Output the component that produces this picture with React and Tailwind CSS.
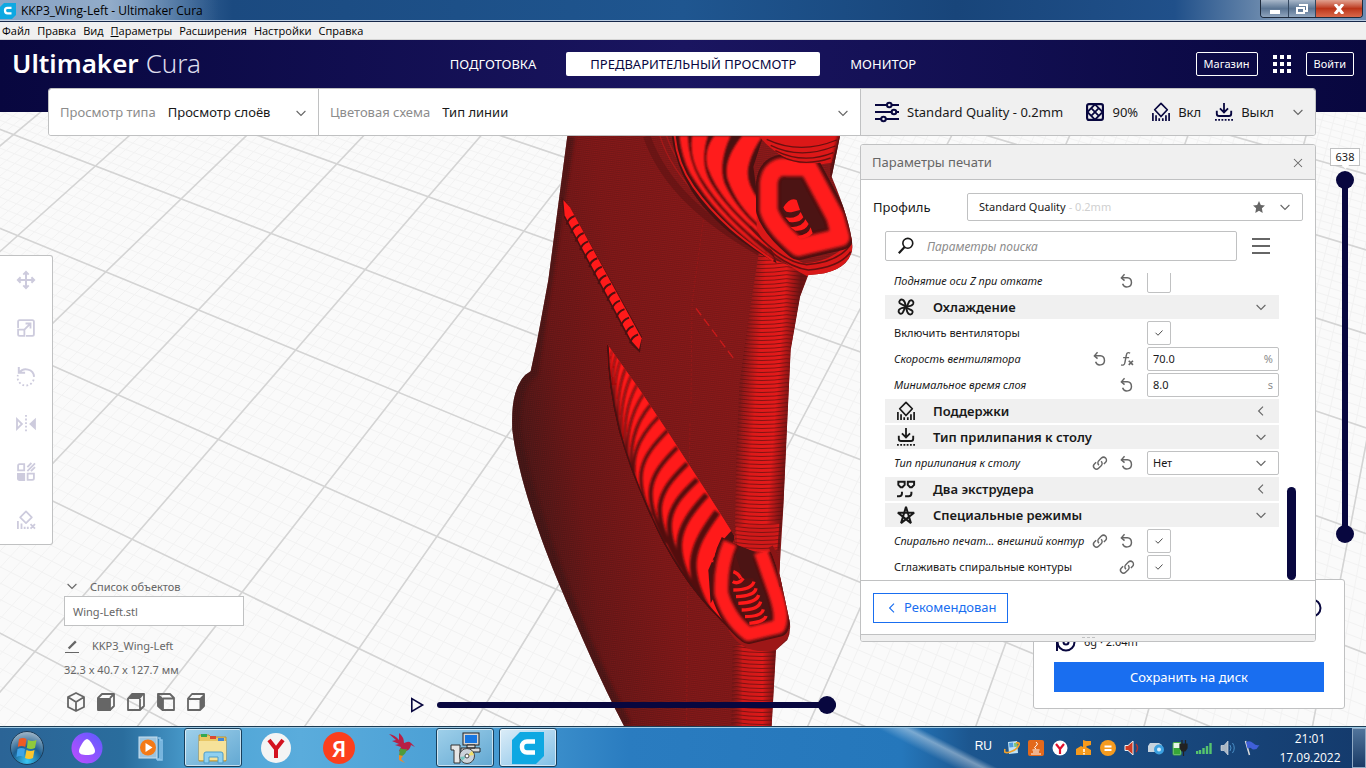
import { useState } from "react";
import clsx from "clsx";

const MENU = ["Файл", "Правка", "Вид", "Параметры", "Расширения", "Настройки", "Справка"];
const STAGES = ["ПОДГОТОВКА", "ПРЕДВАРИТЕЛЬНЫЙ ПРОСМОТР", "МОНИТОР"];

const SETTINGS = [
  { label: "Поднятие оси Z при откате", changed: true, marks: ["reset"], type: "check", value: false },
  { label: "Охлаждение", type: "category", icon: "fan", open: true },
  { label: "Включить вентиляторы", marks: [], type: "check", value: true },
  { label: "Скорость вентилятора", changed: true, marks: ["reset", "fx"], type: "number", value: "70.0", unit: "%" },
  { label: "Минимальное время слоя", changed: true, marks: ["reset"], type: "number", value: "8.0", unit: "s" },
  { label: "Поддержки", type: "category", icon: "support", open: false },
  { label: "Тип прилипания к столу", type: "category", icon: "adhesion", open: true },
  { label: "Тип прилипания к столу", changed: true, marks: ["link", "reset"], type: "select", value: "Нет" },
  { label: "Два экструдера", type: "category", icon: "dual", open: false },
  { label: "Специальные режимы", type: "category", icon: "star", open: true },
  { label: "Спирально печат... внешний контур", changed: true, marks: ["link", "reset"], type: "check", value: true },
  { label: "Сглаживать спиральные контуры", marks: ["link"], type: "check", value: true },
];

/* ---------- icons ---------- */

const BLADE = "M10 10C9 7.500 9.500 3.500 6.500 2 4 1 1.500 3.500 3 5.800 4.500 7.500 8 7.500 10 10z";

const GLYPHS = {
  down: <path d="M4.500 7.500l5.500 5.500 5.500-5.500" strokeWidth="1.400" />,
  left: <path d="M12.500 4.500L7 10l5.500 5.500" strokeWidth="1.400" />,
  close: <path d="M5 5l10 10M15 5L5 15" strokeWidth="1.300" />,
  check: <path d="M3 9.500l5 5 9-9.500" strokeWidth="2" />,
  search: (
    <>
      <circle cx="12" cy="7" r="5.500" strokeWidth="1.800" />
      <path d="M8.500 11L2 18" strokeWidth="2.400" />
    </>
  ),
  reset: (
    <>
      <path d="M2.500 5.500h8a6.500 6.500 0 1 1-6.800 8.500" strokeWidth="2.100" />
      <path d="M6.500 0.500L2 5.500l4.500 4" strokeWidth="2.100" />
    </>
  ),
  fx: (
    <>
      <path d="M14.500 1.500c-4-1.500-5 0-5.500 3.500L7 15c-.5 3-2 4.500-5.500 3.500M4.500 8h8.500" strokeWidth="2" />
      <path d="M12.500 12.500l6 6M18.500 12.500l-6 6" strokeWidth="2.400" />
    </>
  ),
  link: (
    <>
      <path d="M8.500 13a4.200 4.200 0 0 1-.5-6l4-4a4.200 4.200 0 0 1 6 6l-2.500 2.500" strokeWidth="2" />
      <path d="M11.500 7.500a4.200 4.200 0 0 1 .5 6l-4 4a4.200 4.200 0 0 1-6-6l2.500-2.500" strokeWidth="2" />
    </>
  ),
  fan: (
    <g strokeWidth="2.100" strokeLinejoin="round">
      <path d={BLADE} />
      <path d={BLADE} transform="rotate(90 10 10)" />
      <path d={BLADE} transform="rotate(180 10 10)" />
      <path d={BLADE} transform="rotate(270 10 10)" />
    </g>
  ),
  support: (
    <>
      <path d="M10 .5l7 7-7 7.500L3 7.500z" strokeWidth="1.900" strokeLinejoin="round" />
      <path d="M1 11v9M19 11v9M4.500 13.500V20M15.500 13.500V20M8 17v3M12 17v3" strokeWidth="1.900" />
    </>
  ),
  adhesion: (
    <>
      <path d="M10 0v10M5.500 6l4.500 4.500L14.500 6" strokeWidth="2" />
      <path d="M2 8.500v3.500q0 2.500 2.500 2.500h11q2.500 0 2.500-2.500V8.500" strokeWidth="2.100" />
      <path d="M0 18.800h20" strokeWidth="2" strokeDasharray="2 1.600" />
    </>
  ),
  infill: (
    <>
      <rect x="1.200" y="1.200" width="17.600" height="17.600" rx="2" strokeWidth="2.400" />
      <path d="M10 1.500l8.500 8.500-8.500 8.500L1.500 10zM5.500 5.500l9 9M14.500 5.500l-9 9" strokeWidth="2" />
    </>
  ),
  dual: (
    <g strokeWidth="2.200">
      <path d="M1.500 2h7v3.500L6 8H4L1.500 5.500zM12 2h7v3.500L16.500 8h-2L12 5.500z" />
      <path d="M0 18h2.500q3 0 3-3v-2M9 18h4q3 0 3-3v-2" />
    </g>
  ),
  star: <path d="M10 1l5.500 18L1 7.500h18L4.500 19z" strokeWidth="2.200" strokeLinejoin="bevel" />,
  sliders: (
    <g strokeWidth="1.700">
      <path d="M0 4.200h9.800M14 4.200H20M0 10h13.500M18 10H20M0 15.800h5M9.200 15.800H20" />
      <circle cx="11.900" cy="4.200" r="1.900" />
      <circle cx="15.800" cy="10" r="1.900" />
      <circle cx="7.100" cy="15.800" r="1.900" />
    </g>
  ),
  move: (
    <path d="M10 1v18M1 10h18M7 4l3-3 3 3M7 16l3 3 3-3M4 7l-3 3 3 3M16 7l3 3-3 3" strokeWidth="2.200" />
  ),
  scale: (
    <g strokeWidth="2">
      <path d="M1.200 10V3q0-1.800 1.800-1.800h14q1.800 0 1.800 1.800v14q0 1.800-1.800 1.800h-7" />
      <path d="M1.200 11.800h7v7H3q-1.800 0-1.800-1.800z" />
      <path d="M8.500 11.500L15 5M9.500 5H15v5.500" />
    </g>
  ),
  rotate: (
    <>
      <path d="M2 0v6.500h7M2.500 6.500C7 0 18.500 2 19 11" strokeWidth="2.200" />
      <path d="M18.500 14A9 9 0 0 1 1 9" strokeWidth="2" strokeDasharray="2 2.500" />
    </>
  ),
  mirror: (
    <>
      <path d="M0 4.500v11L5.500 10z" strokeWidth="2" />
      <path d="M21 3v14l-7.500-7z" fill="currentColor" stroke="none" />
      <path d="M10 0v20" strokeWidth="2" strokeDasharray="2 2" />
    </>
  ),
  mesh: (
    <>
      <path d="M1.200 3q0-1.800 1.800-1.800h5v7H1.200zM11.800 11.800h7V17q0 1.800-1.800 1.800h-5.200z" strokeWidth="2" />
      <path d="M0 11h9v9H3q-3 0-3-3z" fill="currentColor" stroke="none" />
      <path d="M11.500 4.500L16 0M11.500 9L20 .5M15.500 9L20 4.500" strokeWidth="2" />
    </>
  ),
  blocker: (
    <>
      <path d="M10 .5l6.500 6.500-6.500 6.500L3.500 7z" strokeWidth="1.900" strokeLinejoin="round" />
      <path d="M1 11v9M5 14v6M8.500 17.500V20M12 17.500V20M15 14.500l5 5M20 14.500l-5 5" strokeWidth="2" />
    </>
  ),
  play: <path d="M3.500 2v16L17 10z" strokeWidth="2" />,
  pencil: <path d="M3 15.500L16 2.500" strokeWidth="4.200" />,
};

function Glyph({ name, className }) {
  return (
    <svg viewBox="0 0 20 20" fill="none" stroke="currentColor" className={clsx("shrink-0 overflow-visible", className)} aria-hidden="true">
      {GLYPHS[name]}
    </svg>
  );
}

/* ---------- 3D view ---------- */

// build plate coordinates (one unit = one thick grid cell) to view coordinates
const project = (u, v) => {
  const w = 1 - 0.02304 * u - 0.04645 * v;
  return `${((81.52 * u - 78.49 * v + 95.4) / w).toFixed(1)},${((28.3 * u + 58.64 * v + 166) / w).toFixed(1)}`;
};

const gridPath = (step) => {
  let d = "";
  for (let i = 0; i * step <= 21; i++) {
    const u = -5 + i * step;
    d += `M${project(u, -9)}L${project(u, 8)}`;
  }
  for (let i = 0; i * step <= 17; i++) {
    const v = -9 + i * step;
    d += `M${project(-5, v)}L${project(16, v)}`;
  }
  return d;
};

// dark gaps between the infill ribs: path and width
const LOWER_RIBS = [
  ["M368 660Q350 700 366 800", 4],
  ["M380 672Q358 730 374 850", 5],
  ["M392 690Q364 760 382 890", 5],
  ["M408 712Q374 790 388 920", 6],
  ["M424 736Q384 820 396 950", 6],
  ["M442 762Q392 850 408 985", 6],
  ["M462 790Q398 885 416 1010", 7],
  ["M484 822Q406 910 428 1050", 8],
  ["M508 858C446 920 404 990 452 1110", 9],
  ["M534 900C456 980 424 1030 482 1160", 10],
  ["M562 952C474 1040 452 1090 528 1240", 12],
  ["M592 1000C500 1090 472 1140 572 1310", 13],
  ["M622 1048C524 1140 500 1190 614 1380", 15],
  ["M650 1094C552 1200 532 1260 642 1430", 17],
  ["M682 1146C598 1260 576 1320 676 1480", 20],
];

const UPPER_RIBS = [
  "M568 18Q574 80 600 130C660 230 740 310 856 392L846 378C750 300 670 220 630 150Q596 90 594 18z",
  "M606 18Q596 80 632 142C690 235 760 300 842 362L832 342C760 280 700 220 664 160Q628 100 654 18z",
  "M672 18Q640 60 652 112Q690 220 828 326L816 302Q738 236 704 160Q684 100 722 18z",
  "M756 18Q698 90 712 146Q740 230 816 292L803 205Q762 150 778 100Q788 60 818 18z",
];

const RING = "M895 112Q842 105 836 160L836 240Q850 290 925 352L1052 322L1035 260L955 112z";
const SPAR = "M806 370L955 430L930 500L902 660L892 870L880 1130L868 1262Q800 1275 734 1245L738 1000L748 760L776 560z";
const SPAR_END = "M728 1545L858 1545L845 1788H724z";

function Wing() {
  return (
    <g transform="translate(490 130) scale(.33333)">
      <defs>
        <linearGradient id="skin" gradientUnits="userSpaceOnUse" x1="90" y1="900" x2="800" y2="780">
          <stop offset="0" stopColor="#4a1717" />
          <stop offset=".2" stopColor="#6a1717" />
          <stop offset=".5" stopColor="#801818" />
          <stop offset="1" stopColor="#8b1919" />
        </linearGradient>
        <linearGradient id="spar" gradientUnits="userSpaceOnUse" x1="736" y1="1000" x2="888" y2="1012">
          <stop offset="0" stopColor="#e21a1a" stopOpacity="0" />
          <stop offset=".3" stopColor="#dd1919" />
          <stop offset=".7" stopColor="#e41a1a" />
          <stop offset="1" stopColor="#6b1414" />
        </linearGradient>
        <linearGradient id="sparEnd">
          <stop offset="0" stopColor="#8a1717" stopOpacity="0" />
          <stop offset=".25" stopColor="#cc1919" />
          <stop offset=".7" stopColor="#dd1919" />
          <stop offset="1" stopColor="#6b1414" />
        </linearGradient>
        <pattern id="weave" width="6" height="6" patternUnits="userSpaceOnUse" patternTransform="rotate(7)">
          <path d="M0 1h6" stroke="#3a1010" strokeWidth="2" opacity=".4" />
          <path d="M0 4h3" stroke="#a31d1d" strokeWidth="2" opacity=".35" />
        </pattern>
        <pattern id="rings" width="150" height="12" x="740" patternUnits="userSpaceOnUse">
          <path d="M0 2Q75 13 150 2" fill="none" stroke="#5a1010" strokeWidth="3" opacity=".7" />
        </pattern>
        <filter id="soft" x="-20%" y="-20%" width="140%" height="140%">
          <feGaussianBlur stdDeviation="4" />
        </filter>
        <filter id="softer" x="-20%" y="-20%" width="140%" height="140%">
          <feGaussianBlur stdDeviation="2.500" />
        </filter>
        <clipPath id="leaf">
          <path d="M350 640L450 780L530 900L640 1070L735 1220L700 1330L690 1420L730 1510Q580 1370 500 1200T385 900Q352 770 350 640z" />
        </clipPath>
        <clipPath id="body">
          <path d="M232 18L210 185L175 450L140 640L122 724Q90 740 76 790Q64 830 67 900C80 1010 130 1180 215 1380C270 1510 330 1650 402 1788L845 1788L858 1560L892 1530Q905 1500 898 1470L868 1330L880 1130L892 870L902 660L930 500L955 435Q1080 430 1088 350Q1080 270 1025 140L1050 18z" />
        </clipPath>
      </defs>

      <g clipPath="url(#body)">
        <rect x="50" y="0" width="1060" height="1800" fill="url(#skin)" />
        <path d="M232 18L122 724Q66 760 67 900C80 1010 200 1400 402 1788" fill="none" stroke="#3b1212" strokeWidth="46" opacity=".6" filter="url(#soft)" />
        <rect x="50" y="0" width="1060" height="1800" fill="url(#weave)" />
        <path d="M640 270L606 520L603 820M600 880L592 1500L590 1780" fill="none" stroke="#a01a1a" strokeWidth="3" strokeDasharray="8 6" opacity=".6" />
        <path d="M618 535L738 695" fill="none" stroke="#c81a1a" strokeWidth="4" strokeDasharray="26 14" />
        <path d="M470 18C520 160 640 280 870 400" fill="none" stroke="#5d1313" strokeWidth="22" opacity=".6" />
        <path d="M510 18C550 150 680 270 880 395M530 18C570 140 700 260 880 380" fill="none" stroke="#b31a1a" strokeWidth="4" opacity=".7" />

        {/* spar tube between the ribs */}
        <path d={SPAR} fill="url(#spar)" />
        <path d={SPAR} fill="url(#rings)" />
        <path d={SPAR_END} fill="url(#sparEnd)" />
        <path d={SPAR_END} fill="url(#rings)" />

        {/* upper ribs */}
        <path d="M545 18C570 200 700 310 860 400L810 260L790 110L820 18z" fill="#471111" />
        <path d="M554 18Q562 100 610 170C680 270 760 330 850 392" fill="none" stroke="#e01a1a" strokeWidth="6" />
        {UPPER_RIBS.map((d) => (
          <path key={d} d={d} fill="#ff1a1a" filter="url(#softer)" />
        ))}
        <path d="M808 18H1050L1025 98Q930 115 880 80Q830 50 808 18z" fill="#d91818" />

        {/* upper spar socket */}
        <path d="M800 250Q840 350 940 400Q1040 395 1086 320V360Q1070 430 955 440Q850 390 800 300z" fill="#d91818" />
        <path d="M780 290Q870 395 950 404Q1050 396 1084 340M800 330Q890 412 955 420Q1050 412 1082 365" fill="none" stroke="#681010" strokeWidth="5" />
        <path d={RING} fill="#4c1414" stroke="#4a1010" strokeWidth="76" strokeLinejoin="round" />
        <path d={RING} fill="none" stroke="#ff1a1a" strokeWidth="54" strokeLinejoin="round" filter="url(#soft)" />
        <path d="M880 232Q900 200 920 210L930 240L910 245Q890 250 884 240M886 262Q920 268 932 246L940 262Q930 280 898 276M902 292Q940 290 946 268L956 282Q945 305 916 302M922 318Q955 316 962 292L968 310Q950 328 930 326" fill="#ff1a1a" />
        <path d="M822 18C845 60 875 85 930 100Q990 102 1018 94L1040 18z" fill="#dc1818" />
        <path d="M830 28Q930 75 1040 30M842 46Q930 90 1036 48M856 62Q940 104 1030 68M875 80Q940 112 1022 84" fill="none" stroke="#681010" strokeWidth="4" />
        <path d="M1052 18L1026 140" stroke="#4a1010" strokeWidth="16" filter="url(#soft)" />

        {/* strip of infill steps */}
        <path d="M214 200L240 232L456 620L450 668L425 645L222 262z" fill="#4a1111" />
        <path d="M220 210L240 232L455 625L447 658L424 632L224 256z" fill="#ff1a1a" />
        {Array.from({ length: 15 }, (_, i) => (
          <path key={i} d={`M${254 + i * 13.6} ${258 + i * 25.4}q-20 6-24 26`} fill="none" stroke="#4a1111" strokeWidth="6" />
        ))}

        {/* lower ribs */}
        <g clipPath="url(#leaf)">
          <rect x="340" y="630" width="420" height="900" fill="#ff1a1a" />
          <g fill="none" filter="url(#softer)">
            {LOWER_RIBS.map(([d, w]) => (
              <path key={d} d={d} stroke="#521010" strokeWidth={w} />
            ))}
          </g>
          <path d="M350 640Q352 770 385 900T500 1200T730 1510" fill="none" stroke="#4a1010" strokeWidth="12" />
          <path d="M735 1190L690 1240L655 1320L662 1420L730 1300z" fill="#471212" />
          <path d="M675 1235l8 8m-10 14l12 4m-16 14l10 5m-12 12l8 4" stroke="#ff1a1a" strokeWidth="8" />
        </g>

        {/* lower spar socket */}
        <path d="M715 1500Q760 1580 858 1560L895 1520V1500z" fill="#9d1717" />
        <path d="M722 1235Q688 1300 694 1390Q715 1465 775 1512L866 1490Q880 1460 856 1390L815 1275z" fill="#4c1414" />
        <path d="M722 1235Q688 1300 694 1390Q715 1465 775 1512L866 1490Q880 1460 856 1390L815 1275" fill="none" stroke="#4a1010" strokeWidth="60" strokeLinejoin="round" />
        <path d="M720 1238Q690 1310 694 1390Q715 1465 775 1512L866 1490Q880 1460 856 1390L812 1265" fill="none" stroke="#ff1a1a" strokeWidth="42" strokeLinejoin="round" filter="url(#soft)" />
        <path d="M735 1270Q728 1310 728 1350L745 1420L780 1485L828 1472L808 1400L790 1345L760 1345z" fill="#571212" />
        <path
          d="M730 1325Q745 1330 752 1345M728 1355Q745 1365 760 1345M730 1380Q785 1380 792 1355M738 1400Q795 1398 798 1375M745 1420Q800 1418 806 1395M755 1440Q806 1440 812 1415M765 1460Q815 1460 820 1438M778 1480Q824 1476 828 1458"
          fill="none"
          stroke="#ff1a1a"
          strokeWidth="10"
        />
        <path d="M738 1190L742 1245Q800 1270 862 1258L868 1180z" fill="#d01919" />
        <path d="M738 1190L742 1245Q800 1270 862 1258L868 1180z" fill="url(#rings)" />
        <path d="M842 1250Q872 1300 874 1370" fill="none" stroke="#8a1515" strokeWidth="14" />
      </g>
    </g>
  );
}

function Viewport() {
  return (
    <svg viewBox="0 112 1366 614" preserveAspectRatio="xMidYMid slice" className="absolute inset-0 size-full" aria-hidden="true">
      <rect x="-500" y="0" width="2400" height="1200" fill="#fafafa" />
      <path d={gridPath(0.1)} stroke="#f2f2f2" strokeWidth="1" fill="none" />
      <path d={gridPath(1)} stroke="#d4d4d4" strokeWidth="1.600" fill="none" />
      <Wing />
    </svg>
  );
}

/* ---------- window chrome ---------- */

function TitleBar() {
  return (
    <div className="flex h-[22px] shrink-0 items-start border-b border-[#16284a] bg-[linear-gradient(90deg,#7f9cc0_0%,#4f79a8_10%,#1b4a80_17%,#1f5690_50%,#18457a_70%,#20508a_86%,#7d97b5_94%,#6d8db4_100%)] shadow-[inset_0_-1px_0_#b9cbe0]">
      <div className="flex h-[21px] items-center gap-[5px] bg-linear-to-r from-white/10 via-white/35 to-transparent pr-4">
        <CuraLogo className="size-4" />
        <span className="font-['Open_Sans','Noto_Sans',sans-serif] text-[12px] leading-4 text-black">KKP3_Wing-Left - Ultimaker Cura</span>
      </div>
      <div className="mr-[3px] ml-auto flex h-[18px] overflow-hidden rounded-b-[4px] border border-t-0 border-[#1d2a3c] text-white">
        <button aria-label="Свернуть" className="flex w-7 items-center justify-center border-r border-[#33475f] bg-linear-to-b from-[#a9b8ca] via-[#5b7593] via-50% to-[#8fa4bd]">
          <span className="mt-1.5 h-1 w-2.5 bg-white" />
        </button>
        <button aria-label="Развернуть" className="flex w-[27px] items-center justify-center border-r border-[#33475f] bg-linear-to-b from-[#a9b8ca] via-[#5b7593] via-50% to-[#8fa4bd]">
          <svg viewBox="0 0 14 12" className="h-3 w-3.5" fill="none" stroke="#fff" strokeWidth="2">
            <path d="M5 3V2h7v6h-2" />
            <path d="M2 5h7v5H2z" />
          </svg>
        </button>
        <button aria-label="Закрыть" className="flex w-[46px] items-center justify-center bg-linear-to-b from-[#e0a08f] via-[#bb3418] via-50% to-[#d9684a]">
          <svg viewBox="0 0 12 10" className="h-2.5 w-3" stroke="#fff" strokeWidth="3">
            <path d="M2 0l8 10M10 0L2 10" />
          </svg>
        </button>
      </div>
    </div>
  );
}

function MenuBar() {
  return (
    <nav className="flex h-[18px] shrink-0 items-center gap-[7px] border-b border-[#d5d5d5] bg-[#f0f0f0] pl-0.5 font-['Open_Sans','Noto_Sans',sans-serif] text-[11px] leading-4 text-black">
      {MENU.map((item) => (
        <button key={item}>
          {item === "Параметры" ? (
            <>
              <u>П</u>араметры
            </>
          ) : (
            item
          )}
        </button>
      ))}
    </nav>
  );
}

function Header() {
  const [stage, setStage] = useState(STAGES[1]);
  return (
    <header className="flex h-[72px] shrink-0 items-start bg-linear-to-r from-[#08073f] via-[#1a1560] to-[#08073f] text-white">
      <div className="flex h-[46px] flex-1 items-center pl-3 text-[26px] leading-8">
        <span className="font-semibold">Ultimaker</span>
        <span className="ml-[7px] font-light text-[#dcdcec]">Cura</span>
      </div>
      <div className="flex h-12 items-center gap-1.5">
        {STAGES.map((s) => (
          <button
            key={s}
            onClick={() => setStage(s)}
            className={clsx("h-6 rounded-[2px] px-6 text-[13px] leading-5", s === stage && "bg-white text-[#08073f]")}
          >
            {s}
          </button>
        ))}
      </div>
      <div className="flex h-12 flex-1 items-center justify-end gap-[15px] pr-3 text-[11px]">
        <button className="h-6 rounded-[2px] border border-white px-[7px] pt-px">Магазин</button>
        <button aria-label="Приложения" className="grid grid-cols-3 gap-[3px]">
          {Array.from({ length: 9 }, (_, i) => (
            <span key={i} className="size-1 bg-white" />
          ))}
        </button>
        <button className="h-6 rounded-[2px] border border-white px-[7px] pt-px">Войти</button>
      </div>
    </header>
  );
}

function ViewSelect({ id, label, value, className }) {
  return (
    <div className={clsx("flex items-center gap-3 bg-white pt-px pl-[11px] text-[13px]", className)}>
      <label htmlFor={id} className="text-[#8c8c8c]">
        {label}
      </label>
      <div className="grid flex-1 items-center">
        <select id={id} className="col-start-1 row-start-1 w-full appearance-none bg-transparent text-[#191919] outline-none">
          <option>{value}</option>
        </select>
        <Glyph name="down" className="pointer-events-none col-start-1 row-start-1 size-4 justify-self-end text-[#666]" />
      </div>
    </div>
  );
}

function ViewBar() {
  return (
    <div className="z-10 mr-[50px] ml-12 -mt-6 flex h-12 shrink-0 overflow-hidden rounded-[3px] border border-[#c0c1c2]">
      <ViewSelect id="view-type" label="Просмотр типа" value="Просмотр слоёв" className="w-[270px] border-r border-[#c0c1c2] pr-[9px]" />
      <ViewSelect id="color-scheme" label="Цветовая схема" value="Тип линии" className="flex-1 pr-[9px]" />
      <button className="flex w-[455px] items-center border-l border-[#c0c1c2] bg-[#f0f0f0] pr-[9px] pl-3.5 text-[13px] text-[#191919]">
        <Glyph name="sliders" className="mr-2 size-6 text-[#08073f]" />
        <span className="pt-px">Standard Quality - 0.2mm</span>
        <span className="ml-auto flex items-center">
          <Glyph name="infill" className="mr-2 size-[18px] text-[#08073f]" />
          <span className="pt-px">90%</span>
          <Glyph name="support" className="mr-2 ml-3.5 size-[18px] text-[#08073f]" />
          <span className="pt-px">Вкл</span>
          <Glyph name="adhesion" className="mr-2 ml-3.5 size-[18px] text-[#08073f]" />
          <span className="pt-px">Выкл</span>
          <Glyph name="down" className="ml-4 size-4 text-[#666]" />
        </span>
      </button>
    </div>
  );
}

/* ---------- left column ---------- */

const TOOLS = [
  ["move", "Переместить"],
  ["scale", "Масштаб"],
  ["rotate", "Повернуть"],
  ["mirror", "Отразить"],
  ["mesh", "Настройки модели"],
  ["blocker", "Блокировка поддержки"],
];

function Cube({ label, children }) {
  return (
    <button aria-label={label}>
      <svg viewBox="0 0 20 20" className="size-5" fill="none" stroke="#666" strokeWidth="1.800" strokeLinejoin="round">
        {children}
      </svg>
    </button>
  );
}

function LeftColumn() {
  return (
    <div className="flex w-[244px] shrink-0 flex-col">
      <div className="mt-[119px] flex w-[53px] flex-col gap-[18px] rounded-r-[3px] border border-l-0 border-[#c0c1c2] bg-white py-[9px]">
        {TOOLS.map(([icon, label]) => (
          <button key={icon} aria-label={label} disabled className="flex h-[30px] items-center justify-center text-[#cdcbdd]">
            <Glyph name={icon} className="size-[18px]" />
          </button>
        ))}
      </div>
      <div className="mt-auto flex flex-col pb-3.5 pl-16 text-[11px] leading-4 text-[#666]">
        <button className="flex h-5 items-center gap-2.5">
          <Glyph name="down" className="size-4" />
          <span className="pt-0.5">Список объектов</span>
        </button>
        <div className="flex h-[30px] items-center border border-[#c0c1c2] bg-white px-2 pt-px">Wing-Left.stl</div>
        <button className="mt-2.5 flex h-5 items-center gap-3">
          <span className="flex w-4 flex-col items-center gap-px">
            <Glyph name="pencil" className="size-[11px]" />
            <span className="h-px w-3.5 bg-[#666]" />
          </span>
          <span>KKP3_Wing-Left</span>
        </button>
        <span className="mt-1.5">32.3 x 40.7 x 127.7 мм</span>
        <div className="mt-3.5 flex gap-2.5 pl-0.5">
          <Cube label="3D">
            <path d="M10 1l8 4v10l-8 4-8-4V5zM2 5l8 5 8-5M10 10v9" />
          </Cube>
          <Cube label="Спереди">
            <path d="M2 6l4-4h12v12l-4 4H2z" />
            <path d="M2 7h12v11H4q-2 0-2-2zM14 6l4-4" fill="#666" />
          </Cube>
          <Cube label="Сверху">
            <path d="M2 6.500L6 2h12v12l-4 4H2zM14 7v11" />
            <path d="M1.500 7L6 1.500H18.500L14 7z" fill="#666" stroke="none" />
          </Cube>
          <Cube label="Слева">
            <path d="M2 2h12l4 4v12H6.500L2 14zM7 6.500h11M7 7v11" />
            <path d="M1.500 1.500L7 6v12.500L1.500 14z" fill="#666" stroke="none" />
          </Cube>
          <Cube label="Справа">
            <path d="M2 6.500L6 2h12v12l-4 4H2zM2 7h12" />
            <path d="M13.500 6.500l5-5V14l-5 4.500z" fill="#666" stroke="none" />
          </Cube>
        </div>
      </div>
    </div>
  );
}

const THUMB =
  "[&::-webkit-slider-thumb]:pointer-events-auto [&::-webkit-slider-thumb]:size-[18px] [&::-webkit-slider-thumb]:appearance-none [&::-webkit-slider-thumb]:rounded-full [&::-webkit-slider-thumb]:bg-[#08073f]";

function PathSlider() {
  return (
    <div className="flex flex-1 items-end justify-end pr-6 pb-3">
      <div className="flex w-[427px] items-center gap-3">
        <button aria-label="Воспроизвести">
          <Glyph name="play" className="size-4 text-[#08073f]" />
        </button>
        <div className="grid flex-1 items-center">
          <div className="col-start-1 row-start-1 h-1.5 rounded-full bg-[#08073f]" />
          <input
            type="range"
            aria-label="Путь"
            defaultValue="100"
            className={clsx("col-start-1 row-start-1 h-[18px] w-full appearance-none bg-transparent", THUMB)}
          />
        </div>
      </div>
    </div>
  );
}

function LayerSlider() {
  const vertical = "pointer-events-none col-start-1 row-start-1 h-full w-[18px] appearance-none bg-transparent [writing-mode:vertical-lr] [direction:rtl]";
  return (
    <div className="flex w-[50px] shrink-0 flex-col items-center pt-3 pl-2">
      <output className="flex h-[18px] w-[30px] items-center justify-center border border-[#c0c1c2] bg-white text-[11px] text-[#191919]">638</output>
      <span className="-mt-[3px] size-[5px] rotate-45 bg-white" />
      <div className="mt-[3px] grid h-[372px] justify-items-center">
        <div className="col-start-1 row-start-1 my-2 w-1.5 bg-[#08073f]" />
        <input type="range" aria-label="Верхний слой" min="0" max="638" defaultValue="638" className={clsx(vertical, THUMB)} />
        <input type="range" aria-label="Нижний слой" min="0" max="638" defaultValue="0" className={clsx(vertical, THUMB)} />
      </div>
    </div>
  );
}

/* ---------- print settings ---------- */

function CheckBox({ id, defaultChecked }) {
  return (
    <span className="grid size-6 items-center justify-items-center">
      <input
        id={id}
        type="checkbox"
        defaultChecked={defaultChecked}
        className="peer col-start-1 row-start-1 size-6 appearance-none rounded-[2px] border border-[#c0c1c2] bg-white"
      />
      <Glyph name="check" className="pointer-events-none invisible col-start-1 row-start-1 size-2.5 text-[#4d4d4d] peer-checked:visible" />
    </span>
  );
}

function SettingRow({ setting, id }) {
  const { label, changed, marks, type, value, unit, icon, open } = setting;

  if (type === "category") {
    return (
      <button className="flex h-6 shrink-0 items-center bg-[#f0f0f0] pr-2.5 pl-3 text-[13px] font-semibold text-[#191919]">
        <Glyph name={icon} className="mr-[18px] size-[18px]" />
        <span className="pt-0.5">{label}</span>
        <Glyph name={open ? "down" : "left"} className="ml-auto size-4 text-[#666]" />
      </button>
    );
  }

  return (
    <div className="flex h-6 shrink-0 items-center pl-[9px] text-[11px] text-[#191919]">
      <label htmlFor={id} className={clsx("flex-1 whitespace-nowrap", changed && "italic")}>
        {label}
      </label>
      <span className="flex gap-[13px] pr-[13px] text-[#666]">
        {marks.map((m) => (
          <Glyph key={m} name={m} className="size-3.5" />
        ))}
      </span>
      <span className="w-[132px]">
        {type === "check" && <CheckBox id={id} defaultChecked={value} />}
        {type === "number" && (
          <span className="flex h-6 items-center rounded-[2px] border border-[#c0c1c2] bg-white px-[5px]">
            <input id={id} type="text" defaultValue={value} className="w-full min-w-0 bg-transparent outline-none" />
            <span className="text-[#8c8c8c]">{unit}</span>
          </span>
        )}
        {type === "select" && (
          <span className="grid h-6 items-center rounded-[2px] border border-[#c0c1c2] bg-white pr-[9px] pl-[5px]">
            <select id={id} className="col-start-1 row-start-1 w-full appearance-none bg-transparent outline-none">
              <option>{value}</option>
            </select>
            <Glyph name="down" className="pointer-events-none col-start-1 row-start-1 size-4 justify-self-end text-[#666]" />
          </span>
        )}
      </span>
    </div>
  );
}

function PrintSettings() {
  return (
    <section className="z-10 mt-2 flex h-[498px] w-[456px] shrink-0 flex-col overflow-hidden rounded-[3px] border border-[#c0c1c2] bg-white">
      <div className="flex h-[35px] shrink-0 items-center justify-between border-b border-[#c0c1c2] bg-[#f0f0f0] pt-px pr-[9px] pl-[11px] text-[13px] text-[#666]">
        <h2>Параметры печати</h2>
        <button aria-label="Закрыть параметры">
          <Glyph name="close" className="size-4" />
        </button>
      </div>

      <div className="flex shrink-0 items-center justify-between pt-[13px] pr-3 pl-3">
        <span className="pt-0.5 text-[13px] text-[#191919]">Профиль</span>
        <button className="flex h-7 w-[336px] items-center rounded-[2px] border border-[#c0c1c2] pr-[9px] pl-[11px] text-[11px] text-[#191919]">
          Standard Quality<span className="ml-[3px] text-[#d0d0d0]">- 0.2mm</span>
          <svg viewBox="0 0 20 20" className="mr-3 ml-auto size-3" fill="#666">
            <path d="M10 0l3 6.500 7 .8-5.200 4.900L16.200 20 10 16.200 3.800 20l1.400-7.800L0 7.300l7-.8z" />
          </svg>
          <Glyph name="down" className="size-4 text-[#666]" />
        </button>
      </div>

      <div className="flex shrink-0 items-center gap-[15px] pt-2.5 pl-6">
        <div className="flex h-[30px] w-[352px] items-center gap-3 rounded-[2px] border border-[#c0c1c2] px-[11px]">
          <Glyph name="search" className="size-[18px] text-[#191919]" />
          <input
            type="text"
            aria-label="Параметры поиска"
            placeholder="Параметры поиска"
            className="flex-1 pt-px text-[12px] italic outline-none placeholder:text-[#8c8c8c]"
          />
        </div>
        <button aria-label="Видимость параметров" className="flex w-[18px] flex-col gap-[5px]">
          <span className="h-0.5 bg-[#666]" />
          <span className="h-0.5 bg-[#666]" />
          <span className="h-0.5 bg-[#666]" />
        </button>
      </div>

      <div className="mt-3 flex min-h-0 flex-1 items-end gap-2 overflow-hidden pl-6">
        <div className="flex h-full w-[394px] flex-col justify-end gap-0.5 overflow-hidden pb-px">
          {SETTINGS.map((s, i) => (
            <SettingRow key={i} id={`setting-${i}`} setting={s} />
          ))}
        </div>
        <div className="h-[93px] w-[9px] rounded-full bg-[#08073f]" />
      </div>

      <div className="flex h-[54px] shrink-0 items-center border-t border-[#c0c1c2] pl-3">
        <button className="flex h-[30px] items-center gap-1 border border-[#196ef0] px-2.5 text-[13px] text-[#196ef0]">
          <Glyph name="left" className="size-4" />
          <span className="pt-px">Рекомендован</span>
        </button>
      </div>
      <div className="flex h-[7px] shrink-0 items-start justify-center gap-0.5 border-t border-[#c0c1c2] bg-[#f0f0f0] pt-0.5">
        <span className="h-px w-[3px] bg-[#c0c1c2]" />
        <span className="h-px w-[3px] bg-[#c0c1c2]" />
        <span className="h-px w-[3px] bg-[#c0c1c2]" />
      </div>
    </section>
  );
}

function ActionPanel() {
  return (
    <section className="absolute right-[21px] bottom-[17px] flex w-[312px] flex-col rounded-[3px] border border-[#c0c1c2] bg-white px-5 pt-[18px] pb-4">
      <svg viewBox="0 0 20 20" className="mr-0.5 size-5 self-end" fill="none" stroke="#08073f" strokeWidth="2">
        <circle cx="10" cy="10" r="8.500" />
      </svg>
      <div className="mt-3.5 flex items-center gap-2 text-[11px] text-[#191919]">
        <svg viewBox="0 0 20 20" className="ml-0.5 size-5" fill="none" stroke="#08073f" strokeWidth="2">
          <path d="M1 10v9" />
          <circle cx="10" cy="10" r="8.500" />
          <circle cx="10" cy="10" r="2.500" />
        </svg>
        <span>6g · 2.04m</span>
      </div>
      <button className="mt-2.5 h-[30px] bg-[#196ef0] pt-px text-[13px] text-white">Сохранить на диск</button>
    </section>
  );
}

/* ---------- taskbar ---------- */

function CuraLogo({ className }) {
  return (
    <svg viewBox="0 0 32 32" className={className} aria-hidden="true">
      <path d="M8 0h24v24l-8 8H0V8z" fill="#0ea8e2" />
      <path d="M23 9.500h-8a5 5 0 0 0-5 5v1a5 5 0 0 0 5 5h8" fill="none" stroke="#fff" strokeWidth="4.500" />
    </svg>
  );
}

function Task({ label, active, bright, children }) {
  return (
    <button
      aria-label={label}
      className={clsx(
        "flex h-[39px] w-[58px] items-center justify-center",
        active && "rounded-[3px] border border-[#173f5c] shadow-[inset_0_0_0_1px_#ffffff99]",
        active && (bright ? "bg-linear-to-br from-[#dcedf8] to-[#7fbfe6]" : "bg-linear-to-br from-[#9fd0ea] to-[#62a8d2]"),
      )}
    >
      {children}
    </button>
  );
}

const TRAY = [
  ["Обновления", <><path d="M4 2l9-1 1 12-9 1z" fill="#bfe3f7" /><path d="M5 3l4-.5.500 4.500-4 .5z" fill="#4d9be0" /><path d="M10 3l3-.3.300 4-3 .3z" fill="#7cc576" /><path d="M1 9q-2 5 5 3t9-7q1-3-3-2" fill="none" stroke="#f0a12c" strokeWidth="1.800" /></>],
  ["Java", <><rect width="16" height="16" rx="2" fill="#e3691c" /><path d="M8 2q3 2 0 4t0 3M4.500 10h7M5 12h6M3 14h10" stroke="#fff" fill="none" /></>],
  ["Яндекс Браузер", <><circle cx="8" cy="8" r="7.500" fill="#fff" /><path d="M4 4l4 5 4-5M8 8v6" stroke="#e0102c" strokeWidth="2.200" fill="none" /></>],
  ["Школа", <><path d="M0 15V9l5-3 2 1V0l3 1h5v4l-4 1-1 1 5 3v5z" fill="#f59a1c" /><path d="M8 9v3M8 13v1.500" stroke="#fff" strokeWidth="1.500" /></>],
  ["Калькулятор", <><circle cx="8" cy="8" r="8" fill="#f59b1f" /><path d="M4.500 6.500h7M4.500 10h7" stroke="#fff" strokeWidth="2" /></>],
  ["Динамик", <><path d="M1 5.500h3l5-4.500v14l-5-4.500H1z" fill="#cf3a22" stroke="#eee" /><path d="M12 4q3 4 0 8" stroke="#a33" strokeWidth="1.500" fill="none" /></>],
  ["Принтер", <><path d="M2 3h9l3 2v7H0V6z" fill="#c8d4de" /><circle cx="11" cy="9.500" r="5" fill="#3ca0e0" /><circle cx="11" cy="9.500" r="2" fill="#d7effc" /></>],
  ["Питание", <><rect x="1" y="2.500" width="8" height="12.500" rx="1" fill="#e6f5e6" stroke="#4a4" /><path d="M1.500 8h7v6.500h-7z" fill="#37a637" /><path d="M8 4h7v4l-2 3h-3L8 8zM10 0v4M13.500 0v4M11.500 11v5" fill="#222" stroke="#222" strokeWidth="1.200" /></>],
  ["Сеть", <path d="M1 14v-3M4 14v-4M7.500 14V8M11 14V6M14.500 14V3" stroke="#56c46e" strokeWidth="2.400" />],
  ["Громкость", <><path d="M1 5.500h3l4-4.500v14l-4-4.500H1z" fill="#aab6c2" stroke="#e3e8ed" strokeWidth=".6" /><path d="M10 5q2 3 0 6M12.500 3q3.500 5 0 10" stroke="#4a90c8" fill="none" /></>],
  ["Уведомления", <><path d="M1.500 1l4 14" stroke="#ddd" strokeWidth="1.500" /><path d="M2 2q4-2 7 1t6.500 2l-3 4q-4 1-5-.5t-4 0z" fill="#3f5fd8" /></>],
];

function Taskbar() {
  return (
    <footer className="flex h-[42px] shrink-0 items-center border-t border-[#1c3c54] bg-[linear-gradient(27deg,transparent_66%,#ffffff66_68%,transparent_69%),linear-gradient(90deg,#2b6496_0%,#2a6d9d_9%,#4fa5d6_15%,#5aacdc_22%,#479cd3_36%,#2a7cc0_46%,#2577bb_66%,#1c568f_71%,#143a6c_100%)] text-white shadow-[inset_0_1px_0_#9fcbe6]">
      <button aria-label="Пуск" className="flex w-[54px] justify-center">
        <svg viewBox="0 0 36 36" className="size-9">
          <defs>
            <radialGradient id="orb" cx=".5" cy=".9" r=".9">
              <stop offset="0" stopColor="#39c8f5" />
              <stop offset=".5" stopColor="#1d6093" />
              <stop offset="1" stopColor="#a5b9c9" />
            </radialGradient>
          </defs>
          <circle cx="18" cy="18" r="16.500" fill="url(#orb)" stroke="#1c3d5a" />
          <path d="M10 9q4-2 7.500 0l-1.200 8q-4-2-7.500 0z" fill="#ee5a24" />
          <path d="M19 10q4 2 8.500 0L26 18q-4 2-8.200 0z" fill="#8fca3c" />
          <path d="M8.500 19q4-2 7.500 0l-1.500 8q-3-2-7 0z" fill="#3fa4e8" />
          <path d="M17.500 20q4 2 8 0L24 28q-4 2-8 0z" fill="#fbc62e" />
        </svg>
      </button>
      <div className="ml-1 flex items-center gap-[5px]">
        <Task label="Алиса">
          <svg viewBox="0 0 32 32" className="size-8">
            <defs>
              <linearGradient id="alice" x1="1" y1="0" x2="0" y2="1">
                <stop offset="0" stopColor="#5a5cff" />
                <stop offset="1" stopColor="#c04dff" />
              </linearGradient>
            </defs>
            <circle cx="16" cy="16" r="15.500" fill="url(#alice)" />
            <path d="M16 7c3 0 8 9 8 12s-3 4-8 4-8-1-8-4 5-12 8-12z" fill="#fff" />
          </svg>
        </Task>
        <Task label="Проигрыватель">
          <svg viewBox="0 0 28 28" className="size-7">
            <path d="M22 4h2v21h-4M24 6h2v20h-5" fill="none" stroke="#8cc4ea" strokeWidth="1.500" />
            <rect x="3" y="3" width="18" height="21" fill="#9cc4df" stroke="#c9e0ef" />
            <circle cx="12" cy="13.500" r="8" fill="#f47a17" />
            <path d="M9.500 9v9l7-4.500z" fill="#fff" />
          </svg>
        </Task>
        <Task label="Проводник" active>
          <svg viewBox="0 0 34 32" className="h-8 w-[34px]">
            <path d="M3 3h10l2 2h15v24H3z" fill="#e9c765" stroke="#b8923a" />
            <path d="M5 2h6v3H5z" fill="#34a853" />
            <path d="M14 4h6v3h-6z" fill="#d94a32" />
            <path d="M22 6h6v3h-6z" fill="#4386d6" />
            <path d="M3 9h27v19H3z" fill="#f6e29a" />
            <path d="M8 31V22q0-2 2-2h15q2 0 2 2v9h-5v-6h-9v6z" fill="#8fd0f0" stroke="#4d9cc9" />
          </svg>
        </Task>
        <Task label="Яндекс Браузер">
          <svg viewBox="0 0 32 32" className="size-8">
            <circle cx="16" cy="16" r="15" fill="#f4f4f4" />
            <path d="M9 8l7 9 7-9M16 16v10" fill="none" stroke="#d3121f" strokeWidth="4" />
          </svg>
        </Task>
        <Task label="Яндекс">
          <span className="flex size-8 items-center justify-center rounded-full bg-[#fc3f1d] text-[22px] leading-8 font-semibold">Я</span>
        </Task>
        <Task label="Колибри">
          <svg viewBox="0 0 28 32" className="h-8 w-7">
            <path d="M1 2q6 1 10 6L11 1q5 4 5 10l3-1q2-1 4 1l4 4-4-2q-1 5-5 6-5 2-7 0l2-4-6-2 4-1-7-3 4-1z" fill="#b81f45" />
            <path d="M12 16q4 2 7 1-1 5-5 7l-3 0z" fill="#4f9b3c" />
            <path d="M11 23l4 1-2 3 4 4-6-3z" fill="#f08b28" />
          </svg>
        </Task>
        <Task label="Установка" active>
          <svg viewBox="0 0 32 32" className="size-8">
            <rect x="14" y="1" width="16" height="12" fill="#d5d5d5" stroke="#222" />
            <rect x="16" y="3" width="12" height="8" fill="#1877e0" />
            <path d="M12 16h19v4H12zM18 13h8v3h-8z" fill="#ddd" stroke="#222" />
            <path d="M2 13h9v18H5V18H2z" fill="#e6e6e6" stroke="#333" />
            <circle cx="18" cy="24" r="7.500" fill="#ccd3da" stroke="#444" />
            <path d="M18 24l5-5 2 4z" fill="#f0df6a" />
            <path d="M18 24l-5 5-2-4z" fill="#79c7c0" />
            <circle cx="18" cy="24" r="2" fill="#fff" stroke="#444" />
          </svg>
        </Task>
        <Task label="Ultimaker Cura" active bright>
          <CuraLogo className="size-8" />
        </Task>
      </div>
      <div className="ml-auto flex items-center">
        <span className="mr-3 pb-1 font-['Liberation_Sans',sans-serif] text-[12px] leading-4">RU</span>
        <div className="flex gap-2">
          {TRAY.map(([label, art]) => (
            <button key={label} aria-label={label}>
              <svg viewBox="0 0 16 16" className="size-4">
                {art}
              </svg>
            </button>
          ))}
        </div>
        <div className="mr-2 ml-4 flex w-[68px] flex-col items-center font-['Open_Sans','Noto_Sans',sans-serif] text-[12px] leading-[19px]">
          <span>21:01</span>
          <span>17.09.2022</span>
        </div>
        <button aria-label="Показать рабочий стол" className="h-10 w-3.5 border border-[#8fa9c4] bg-linear-to-b from-[#51749b] to-[#1a3b66]" />
      </div>
    </footer>
  );
}

export default function App() {
  return (
    <div className="flex h-screen flex-col overflow-hidden font-['Noto_Sans','Open_Sans',sans-serif]">
      <TitleBar />
      <MenuBar />
      <Header />
      <main className="relative flex min-h-0 flex-1 flex-col">
        <Viewport />
        <ViewBar />
        <ActionPanel />
        <div className="relative flex min-h-0 flex-1">
          <LeftColumn />
          <PathSlider />
          <PrintSettings />
          <LayerSlider />
        </div>
      </main>
      <Taskbar />
    </div>
  );
}
